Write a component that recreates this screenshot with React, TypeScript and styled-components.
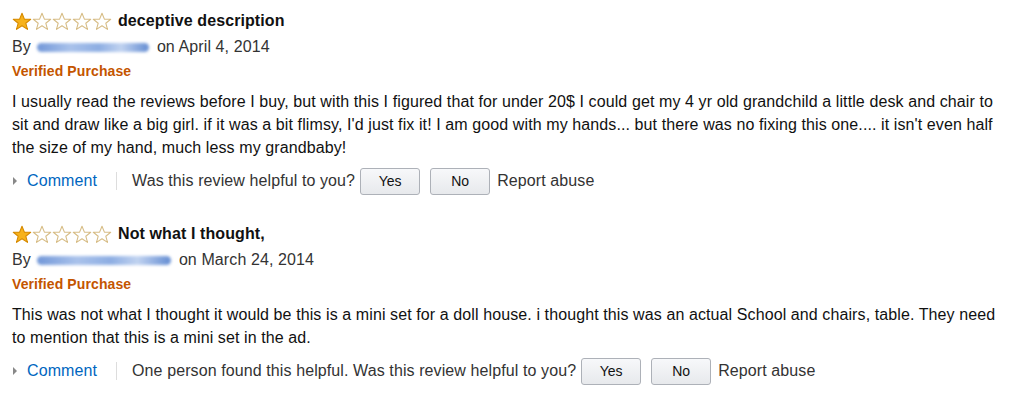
import React from 'react';
import styled, { createGlobalStyle } from 'styled-components';

const GlobalStyle = createGlobalStyle`
  body {
    margin: 0;
    background: #fff;
    font-family: "Liberation Sans", Arial, sans-serif;
    color: #111;
    letter-spacing: 0.1px;
  }
`

const Page = styled.div`
  padding: 10px 26px 0 12px;
  display: flex;
  flex-direction: column;
`

const Review = styled.section`
  display: flex;
  flex-direction: column;
  margin-bottom: 28px;
`

const TitleRow = styled.div`
  display: flex;
  align-items: center;
  height: 22px;
  gap: 6px;
`

const Stars = styled.div`
  display: flex;
  align-items: center;
`

const Title = styled.span`
  font-size: 16px;
  font-weight: bold;
  color: #111;
`

const ByLine = styled.div`
  display: flex;
  align-items: center;
  margin-top: 3px;
  height: 24px;
  font-size: 16px;
  color: #333;
`

const BlurName = styled.span<{ $w: number }>`
  display: inline-block;
  width: ${p => p.$w}px;
  height: 9px;
  margin: 0 8px 0 6px;
  border-radius: 5px;
  background: linear-gradient(90deg, #5a86d2 0%, #9bb8e8 30%, #7aa0de 55%, #b6cbee 75%, #4a7acb 100%);
  filter: blur(1.8px);
  opacity: 0.85;
`

const Verified = styled.div`
  height: 24px;
  line-height: 24px;
  font-size: 14px;
  font-weight: bold;
  color: #c45500;
`

const Body = styled.p`
  margin: 7px 0 0 0;
  font-size: 16px;
  line-height: 23px;
  color: #111;
`

const ActionRow = styled.div`
  display: flex;
  align-items: center;
  margin-top: 8px;
  height: 28px;
  font-size: 16px;
`

const Caret = styled.span`
  width: 0;
  height: 0;
  border-top: 4px solid transparent;
  border-bottom: 4px solid transparent;
  border-left: 4px solid #888;
  margin: 0 10px 0 1px;
`

const CommentLink = styled.a`
  color: #0066c0;
  text-decoration: none;
  cursor: pointer;
`

const Divider = styled.span`
  width: 1px;
  height: 18px;
  background: #ddd;
  margin: 0 15px 0 19px;
`

const Helpful = styled.span`
  color: #333;
`

const Buttons = styled.div`
  display: flex;
  gap: 10px;
  margin: 0 7px 0 5px;
`

const VoteButton = styled.button`
  width: 60px;
  height: 27px;
  border: 1px solid #adb1b8;
  border-radius: 3px;
  background: linear-gradient(#f7f8fa, #e7e9ec);
  font-family: "Liberation Sans", Arial, sans-serif;
  font-size: 14px;
  color: #111;
  padding: 0;
  cursor: pointer;
`

const Report = styled.span`
  color: #333;
`

const Star: React.FC<{ filled: boolean }> = ({ filled }) => (
  <svg width="20" height="19" viewBox="0 0 20 19">
    <path
      d="M10 1.2 L12.4 7.1 L18.7 7.3 L13.8 11.2 L15.5 17.4 L10 13.8 L4.5 17.4 L6.2 11.2 L1.3 7.3 L7.6 7.1 Z"
      fill={filled ? '#f7b21b' : '#fff'}
      stroke={filled ? '#d68a00' : '#d7bd86'}
      strokeWidth="1.1"
      strokeLinejoin="round"
    />
  </svg>
)

interface ReviewData {
  rating: number;
  title: string;
  nameWidth: number;
  date: string;
  text: string;
  helpful: string;
}

const reviews: ReviewData[] = [
  {
    rating: 1,
    title: 'deceptive description',
    nameWidth: 112,
    date: 'April 4, 2014',
    text: "I usually read the reviews before I buy, but with this I figured that for under 20$ I could get my 4 yr old grandchild a little desk and chair to sit and draw like a big girl. if it was a bit flimsy, I'd just fix it! I am good with my hands... but there was no fixing this one.... it isn't even half the size of my hand, much less my grandbaby!",
    helpful: 'Was this review helpful to you?',
  },
  {
    rating: 1,
    title: 'Not what I thought,',
    nameWidth: 134,
    date: 'March 24, 2014',
    text: 'This was not what I thought it would be this is a mini set for a doll house. i thought this was an actual School and chairs, table. They need to mention that this is a mini set in the ad.',
    helpful: 'One person found this helpful. Was this review helpful to you?',
  },
]

const App: React.FC = () => {
  return (
    <>
      <GlobalStyle />
      <Page>
        {reviews.map((r, i) => (
          <Review key={i}>
            <TitleRow>
              <Stars>
                {[0, 1, 2, 3, 4].map(n => (
                  <Star key={n} filled={n < r.rating} />
                ))}
              </Stars>
              <Title>{r.title}</Title>
            </TitleRow>
            <ByLine>
              By<BlurName $w={r.nameWidth} />on {r.date}
            </ByLine>
            <Verified>Verified Purchase</Verified>
            <Body>{r.text}</Body>
            <ActionRow>
              <Caret />
              <CommentLink>Comment</CommentLink>
              <Divider />
              <Helpful>{r.helpful}</Helpful>
              <Buttons>
                <VoteButton>Yes</VoteButton>
                <VoteButton>No</VoteButton>
              </Buttons>
              <Report>Report abuse</Report>
            </ActionRow>
          </Review>
        ))}
      </Page>
    </>
  );
};

export default App;
